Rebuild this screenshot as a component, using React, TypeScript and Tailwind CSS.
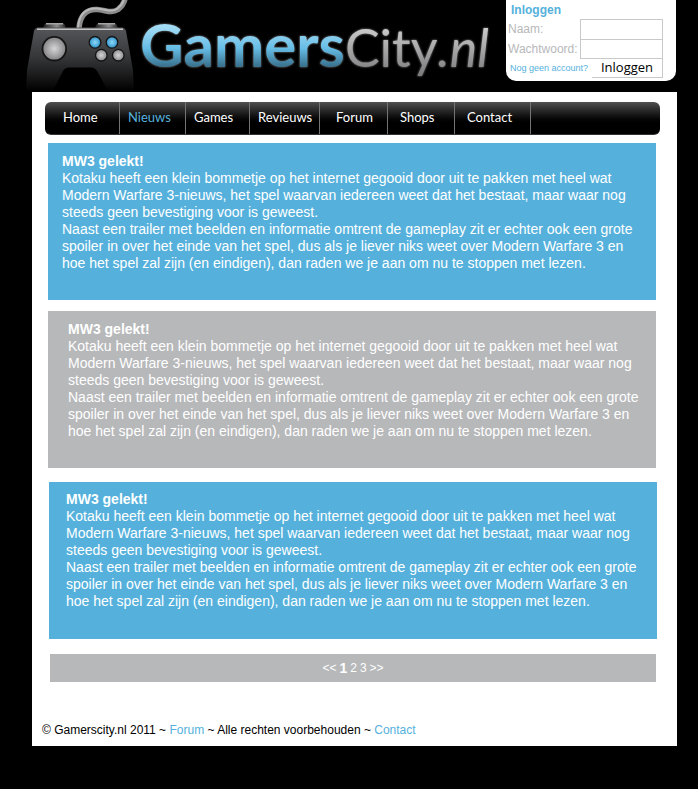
import clsx from "clsx";

const NAV_ITEMS = [
  { label: "Home", cls: "w-[75px] pl-[18px] text-white" },
  { label: "Nieuws", cls: "w-[66px] pl-2 text-[#55b1dc]" },
  { label: "Games", cls: "w-16 pl-2 text-white" },
  { label: "Revieuws", cls: "w-[70px] pl-2 text-white" },
  { label: "Forum", cls: "w-[68px] pl-4 text-white" },
  { label: "Shops", cls: "w-[67px] pl-3 text-white" },
  { label: "Contact", cls: "w-[76px] pl-3 text-white" },
];

const ARTICLES = [
  { id: 1, cls: "bg-[#55b1dc] mb-[11px] pt-[10px] pl-[14px]" },
  { id: 2, cls: "bg-[#b7b8ba] mb-[14px] pt-[10px] pl-5" },
  { id: 3, cls: "bg-[#55b1dc] mb-[15px] ml-px -mr-px pt-[9px] pl-[17px]" },
];

function Gamepad() {
  return (
    <svg viewBox="20 0 120 92" className="h-[92px] w-[120px] shrink-0" aria-hidden="true">
      <defs>
        <linearGradient id="body" x1="0" y1="0" x2="0" y2="1">
          <stop offset="0" stopColor="#55565a" />
          <stop offset="0.45" stopColor="#37383a" />
          <stop offset="0.75" stopColor="#1b1b1c" />
          <stop offset="1" stopColor="#000" />
        </linearGradient>
        <linearGradient id="shoulder" x1="0" y1="0" x2="1" y2="0">
          <stop offset="0" stopColor="#1c1c1c" />
          <stop offset="0.6" stopColor="#8d8d8f" />
          <stop offset="1" stopColor="#222" />
        </linearGradient>
        <radialGradient id="grey">
          <stop offset="0" stopColor="#d6d6d7" />
          <stop offset="1" stopColor="#88888a" />
        </radialGradient>
        <radialGradient id="blue">
          <stop offset="0" stopColor="#8fd8f8" />
          <stop offset="1" stopColor="#2c93cc" />
        </radialGradient>
      </defs>
      {/* cable */}
      <g fill="none">
        <path d="M79 28C80 15 87 9 97 9.500C106 10 111 14 118 9.500C122 6.500 124 3 125 -1" stroke="#8b8b8c" strokeWidth="5.500" />
        <path d="M78 28C79 14 86 8 97 8.500C106 9 111 13 117.500 8.500C121 6 123 3 124 -1" stroke="#b9b9ba" strokeWidth="2" />
      </g>
      {/* shoulder buttons */}
      <path d="M43 28L44 25Q45 23 48 23H61Q64 23 65 25L66 28Z" fill="url(#shoulder)" />
      <path d="M95 28L96 25Q97 23 100 23H113Q116 23 117 25L118 28Z" fill="url(#shoulder)" />
      <path d="M46 23.700H63M98 23.700H115" stroke="#a5a5a6" strokeWidth="1.500" />
      <path
        d="M38 27.500H122Q125 27.500 126 31L133 70L134 91H108L97 71Q95 67.500 91 67.500H69Q65 67.500 63 71L53 91H26L27 70L34 31Q35 27.500 38 27.500Z"
        fill="url(#body)"
      />
      <path d="M37 29.200H123" stroke="#c4c4c5" strokeWidth="1.500" />
      <circle cx="54.300" cy="48.700" r="12.700" fill="#151515" />
      <circle cx="54.300" cy="48.700" r="10.900" fill="url(#grey)" />
      <g stroke="#151515" strokeWidth="1.300">
        <circle cx="95" cy="42.300" r="5.800" fill="url(#blue)" />
        <circle cx="112" cy="42.300" r="5.800" fill="url(#blue)" />
        <circle cx="101.300" cy="55.200" r="5.800" fill="url(#grey)" />
        <circle cx="118.300" cy="55.200" r="5.800" fill="url(#grey)" />
      </g>
    </svg>
  );
}

function LoginForm() {
  return (
    <form
      onSubmit={(e) => e.preventDefault()}
      className="mr-[22px] ml-auto h-[81px] w-[170px] shrink-0 rounded-b-[10px] bg-white pt-[2px] pr-[13px] pl-[2px]"
    >
      <h2 className="pl-[3px] text-[12px] leading-[17px] font-bold text-[#55b1dc]">Inloggen</h2>
      <div className="flex h-5 items-center justify-between">
        <label htmlFor="naam" className="text-[12px] text-[#b7b8ba]">Naam:</label>
        <input id="naam" type="text" className="h-5 w-[83px] border border-b-0 border-[#c8c9ca] px-1 text-[12px] outline-none" />
      </div>
      <div className="flex h-5 items-center justify-between">
        <label htmlFor="wachtwoord" className="text-[12px] text-[#b7b8ba]">Wachtwoord:</label>
        <input id="wachtwoord" type="password" className="h-5 w-[83px] border border-[#c8c9ca] px-1 text-[12px] outline-none" />
      </div>
      <div className="flex h-[19px] items-center justify-between pl-[2px]">
        <a href="#account" className="text-[9px] whitespace-nowrap text-[#55b1dc]">Nog geen account?</a>
        <button
          type="submit"
          className="flex h-[19px] w-[71px] items-center justify-center border-r border-b border-[#c8c9ca] font-['Open_Sans',sans-serif] text-[13px] text-black"
        >
          Inloggen
        </button>
      </div>
    </form>
  );
}

export default function App() {
  return (
    <div className="min-h-screen bg-black font-['Liberation_Sans',Arial,sans-serif]">
      <header className="flex h-[92px] items-start pl-5">
        <Gamepad />
        <h1 className="flex items-baseline font-['Lato',sans-serif] text-[52px] leading-[88px] whitespace-nowrap drop-shadow-[0_0_1px_#888]">
          <span className="bg-linear-to-b from-[#a3dcf5] from-30% via-[#66bde6] via-55% to-[#3a7390] to-75% bg-clip-text text-[60px] font-bold text-transparent">Gamers</span>
          <span className="bg-linear-to-b from-[#c9c9ca] from-30% to-[#7e7e80] to-80% bg-clip-text text-transparent">City</span>
          <span className="bg-linear-to-b from-[#c9c9ca] from-30% to-[#7e7e80] to-80% bg-clip-text pr-1 text-transparent italic">.nl</span>
        </h1>
        <LoginForm />
      </header>

      <div className="mr-[21px] ml-8 bg-white pt-[10px] pb-2">
        <nav className="mr-[17px] ml-[13px] flex h-[33px] overflow-hidden rounded-md border-b border-[#333] bg-linear-to-b from-[#515151] to-black to-75%">
          {NAV_ITEMS.map((item) => (
            <a
              key={item.label}
              href="#"
              className={clsx(
                "flex items-center border-r border-[#747474] font-['Lato',sans-serif] text-[13px]",
                item.cls
              )}
            >
              {item.label}
            </a>
          ))}
        </nav>

        <main className="mr-[21px] ml-4 pt-2">
          {ARTICLES.map((article) => (
            <article
              key={article.id}
              className={clsx("min-h-[157px] pr-3 text-[14px] leading-[17px] text-white", article.cls)}
            >
              <h2 className="font-bold">MW3 gelekt!</h2>
              <p>
                Kotaku heeft een klein bommetje op het internet gegooid door uit te pakken met heel wat Modern Warfare
                3-nieuws, het spel waarvan iedereen weet dat het bestaat, maar waar nog steeds geen bevestiging voor is
                geweest.
              </p>
              <p>
                Naast een trailer met beelden en informatie omtrent de gameplay zit er echter ook een grote spoiler in
                over het einde van het spel, dus als je liever niks weet over Modern Warfare 3 en hoe het spel zal zijn
                (en eindigen), dan raden we je aan om nu te stoppen met lezen.
              </p>
            </article>
          ))}

          <nav className="ml-[2px] flex h-7 items-center justify-center gap-[3px] bg-[#b7b8ba] text-[12px] text-white">
            <a href="#">&lt;&lt;</a>
            <a href="#" className="text-[14px] font-bold">1</a>
            <a href="#">2</a>
            <a href="#">3</a>
            <a href="#">&gt;&gt;</a>
          </nav>
        </main>

        <footer className="mt-10 pl-[10px] text-[12px] leading-4 text-black">
          © Gamerscity.nl 2011 ~ <a href="#forum" className="text-[#55b1dc]">Forum</a> ~ Alle rechten voorbehouden ~{" "}
          <a href="#contact" className="text-[#55b1dc]">Contact</a>
        </footer>
      </div>
    </div>
  );
}
